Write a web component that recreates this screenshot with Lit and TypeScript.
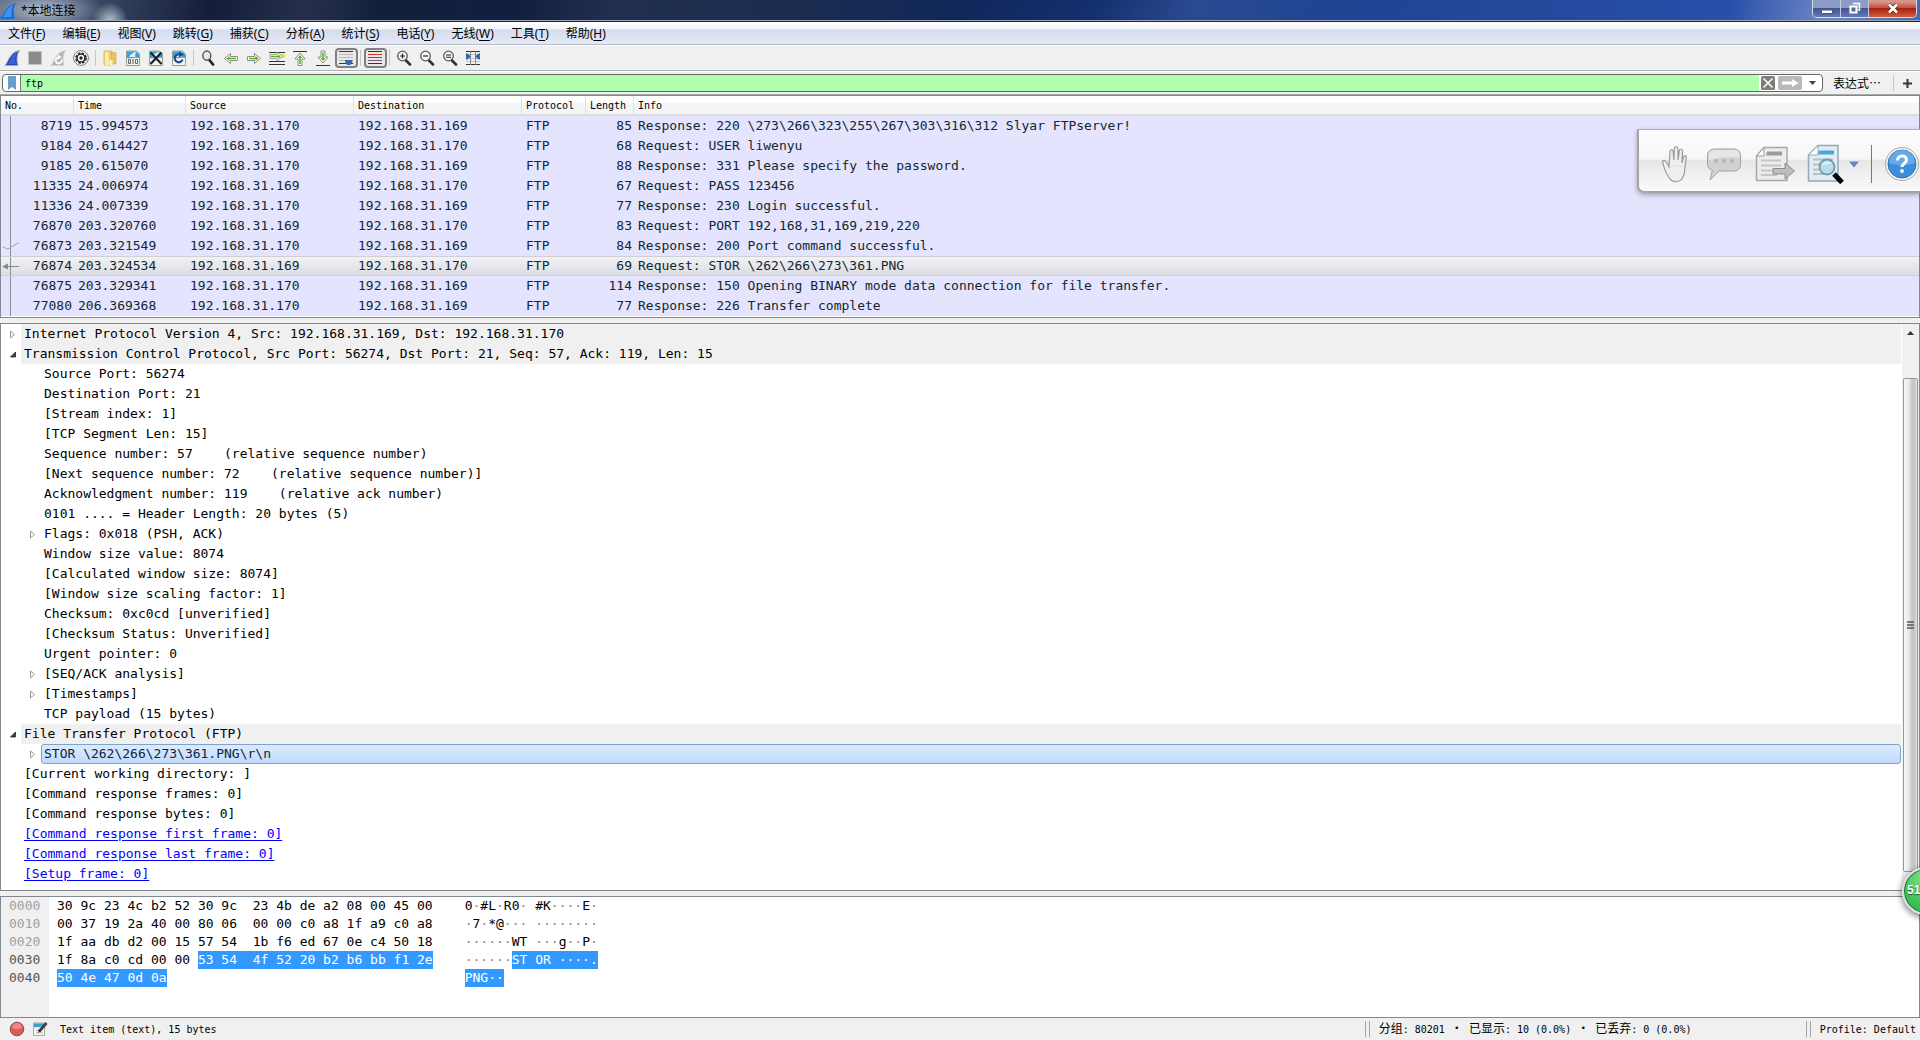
import { LitElement, html, css, svg, nothing, TemplateResult } from "lit";
import { customElement } from "lit/decorators.js";
import { classMap } from "lit/directives/class-map.js";

interface Packet {
  no: string;
  time: string;
  src: string;
  dst: string;
  len: string;
  info: string;
  mark?: "ack" | "current";
}

const CLIENT = "192.168.31.169";
const SERVER = "192.168.31.170";

const packets: Packet[] = [
  { no: "8719", time: "15.994573", src: SERVER, dst: CLIENT, len: "85", info: "Response: 220 \\273\\266\\323\\255\\267\\303\\316\\312 Slyar FTPserver!" },
  { no: "9184", time: "20.614427", src: CLIENT, dst: SERVER, len: "68", info: "Request: USER liwenyu" },
  { no: "9185", time: "20.615070", src: SERVER, dst: CLIENT, len: "88", info: "Response: 331 Please specify the password." },
  { no: "11335", time: "24.006974", src: CLIENT, dst: SERVER, len: "67", info: "Request: PASS 123456" },
  { no: "11336", time: "24.007339", src: SERVER, dst: CLIENT, len: "77", info: "Response: 230 Login successful." },
  { no: "76870", time: "203.320760", src: CLIENT, dst: SERVER, len: "83", info: "Request: PORT 192,168,31,169,219,220" },
  { no: "76873", time: "203.321549", src: SERVER, dst: CLIENT, len: "84", info: "Response: 200 Port command successful.", mark: "ack" },
  { no: "76874", time: "203.324534", src: CLIENT, dst: SERVER, len: "69", info: "Request: STOR \\262\\266\\273\\361.PNG", mark: "current" },
  { no: "76875", time: "203.329341", src: SERVER, dst: CLIENT, len: "114", info: "Response: 150 Opening BINARY mode data connection for file transfer." },
  { no: "77080", time: "206.369368", src: SERVER, dst: CLIENT, len: "77", info: "Response: 226 Transfer complete" },
];

interface Field {
  text: string;
  level: 0 | 1;
  toggle?: "open" | "closed";
  kind?: "proto" | "selected" | "link";
}

const fields: Field[] = [
  { text: "Internet Protocol Version 4, Src: 192.168.31.169, Dst: 192.168.31.170", level: 0, toggle: "closed", kind: "proto" },
  { text: "Transmission Control Protocol, Src Port: 56274, Dst Port: 21, Seq: 57, Ack: 119, Len: 15", level: 0, toggle: "open", kind: "proto" },
  { text: "Source Port: 56274", level: 1 },
  { text: "Destination Port: 21", level: 1 },
  { text: "[Stream index: 1]", level: 1 },
  { text: "[TCP Segment Len: 15]", level: 1 },
  { text: "Sequence number: 57    (relative sequence number)", level: 1 },
  { text: "[Next sequence number: 72    (relative sequence number)]", level: 1 },
  { text: "Acknowledgment number: 119    (relative ack number)", level: 1 },
  { text: "0101 .... = Header Length: 20 bytes (5)", level: 1 },
  { text: "Flags: 0x018 (PSH, ACK)", level: 1, toggle: "closed" },
  { text: "Window size value: 8074", level: 1 },
  { text: "[Calculated window size: 8074]", level: 1 },
  { text: "[Window size scaling factor: 1]", level: 1 },
  { text: "Checksum: 0xc0cd [unverified]", level: 1 },
  { text: "[Checksum Status: Unverified]", level: 1 },
  { text: "Urgent pointer: 0", level: 1 },
  { text: "[SEQ/ACK analysis]", level: 1, toggle: "closed" },
  { text: "[Timestamps]", level: 1, toggle: "closed" },
  { text: "TCP payload (15 bytes)", level: 1 },
  { text: "File Transfer Protocol (FTP)", level: 0, toggle: "open", kind: "proto" },
  { text: "STOR \\262\\266\\273\\361.PNG\\r\\n", level: 1, toggle: "closed", kind: "selected" },
  { text: "[Current working directory: ]", level: 0 },
  { text: "[Command response frames: 0]", level: 0 },
  { text: "[Command response bytes: 0]", level: 0 },
  { text: "[Command response first frame: 0]", level: 0, kind: "link" },
  { text: "[Command response last frame: 0]", level: 0, kind: "link" },
  { text: "[Setup frame: 0]", level: 0, kind: "link" },
];

interface HexLine {
  offset: string;
  hex: string;
  hexSel?: string;
  text: string;
  textSel?: string;
}

const hexLines: HexLine[] = [
  { offset: "0000", hex: "30 9c 23 4c b2 52 30 9c  23 4b de a2 08 00 45 00", text: "0·#L·R0· #K····E·" },
  { offset: "0010", hex: "00 37 19 2a 40 00 80 06  00 00 c0 a8 1f a9 c0 a8", text: "·7·*@··· ········" },
  { offset: "0020", hex: "1f aa db d2 00 15 57 54  1b f6 ed 67 0e c4 50 18", text: "······WT ···g··P·" },
  { offset: "0030", hex: "1f 8a c0 cd 00 00 ", hexSel: "53 54  4f 52 20 b2 b6 bb f1 2e", text: "······", textSel: "ST OR ····." },
  { offset: "0040", hex: "", hexSel: "50 4e 47 0d 0a", text: "", textSel: "PNG··" },
];

const menus: [string, string][] = [
  ["文件", "F"], ["编辑", "E"], ["视图", "V"], ["跳转", "G"], ["捕获", "C"], ["分析", "A"],
  ["统计", "S"], ["电话", "Y"], ["无线", "W"], ["工具", "T"], ["帮助", "H"],
];

const file = svg`<path d="M1.5 1h10l3 3v11.500h-13z" fill="#f4f6ee" stroke="#9a9d92"/><path d="M2 1.500h9.500l2.500 2.500v4c-4-1-7 1-12 0z" fill="#3c9fd6"/><path d="M4 7c1.500-3 4-5 8-5-2 1-2 3-1.500 5z" fill="#d8eef8"/>`;
const fin = "M1 15.500C4.500 12 5.500 2 15.500.500 12.500 4.500 12.500 11 14 15.500z";
const greenRight = "M1.500 6.500h7V3.500l6 5-6 5v-3h-7z";
const lens = svg`<path d="M9.500 10l4.500 4.500" stroke="#333" stroke-width="2.600" stroke-linecap="round"/><circle cx="6.500" cy="6" r="4.800" fill="#f6f6f6" stroke="#555b58" stroke-width="1.300"/>`;

const icons: Record<string, TemplateResult> = {
  start: svg`<path d=${fin} fill="#1f45bd" stroke="#a9abb0"/><path d="M4 14C7 10 7.500 4 13 2c-2 4-2 8-1 12z" fill="#3a62d6"/>`,
  stop: svg`<path d="M1.500 1.500h13v13h-13z" fill="#8b8b8b" stroke="#c4c4c4"/>`,
  restart: svg`<path d=${fin} fill="#b4b4b4" stroke="#d2d2d2"/><path d="M11.500 9.500a3 3 0 1 1-2.500-2" fill="none" stroke="#fff" stroke-width="1.800"/><path d="M8 4.500l3.500 2.500L8 9.500z" fill="#fff"/>`,
  options: svg`<circle cx="8" cy="8" r="7.400" fill="#fff" stroke="#777"/><circle cx="8" cy="8" r="5" fill="none" stroke="#333" stroke-width="1.800" stroke-dasharray="2.600 1.327"/><circle cx="8" cy="8" r="3.900" fill="none" stroke="#222" stroke-width="1.400"/><circle cx="8" cy="8" r="1.700" fill="#222"/>`,
  open: svg`<path d="M2 1h8v14H2z" fill="#f0d376" stroke="#c9a748" stroke-width=".6"/><path d="M9 2.500h5V14H9z" fill="#e7c45c" stroke="#c9a748" stroke-width=".6"/><path d="M3 2h3l1 13H3z" fill="#faecb4"/><path d="M7.500 10h3v5h-3z" fill="#fff3c2"/>`,
  save: svg`${file}<path d="M3.500 9.500h2v4h-2zM10.500 9.500h2v4h-2z" fill="none" stroke="#666"/><path d="M8 9v5" stroke="#666" stroke-width="1.200"/>`,
  close: svg`${file}<path d="M2.500 2.500l11 11.500M13.500 2.500l-11 11.500" stroke="#1c2330" stroke-width="2.200"/>`,
  reload: svg`${file}<path d="M11.500 9.500a4 4 0 1 1-2.500-5" fill="none" stroke="#1e4a8c" stroke-width="2.200"/><path d="M8 1l5 3.500L8 7.500z" fill="#1e4a8c"/>`,
  find: svg`<path d="M9 9.500l4 5" stroke="#222" stroke-width="2.800" stroke-linecap="round"/><ellipse cx="6.800" cy="5.600" rx="4" ry="4.600" fill="#e8e8e8" stroke="#555" stroke-width="1.400"/>`,
  back: svg`<path d="M14.500 6.500h-7V3.500l-6 5 6 5v-3h7z" fill="#fff" stroke="#8c8c8c"/><path d="M13 7.800H6.500V6L3.500 8.500l3 2.500V9.300H13z" fill="#55b614"/>`,
  forward: svg`<path d=${greenRight} fill="#fff" stroke="#8c8c8c"/><path d="M3 7.800h6.500V6l3 2.500-3 2.500V9.300H3z" fill="#55b614"/>`,
  goto: svg`<path d="M0 2.500h16M0 11.500h16M0 14.500h16" stroke="#333"/><path d="M11 4h5v4h-5z" fill="#f4e14a"/><path d="M1 4.500h7V2l5.500 4.500L8 11V8.500H1z" fill="#fff" stroke="#8c8c8c" stroke-width=".8"/><path d="M2 5.700h7V4.500l2.700 2L9 8.700V7.200H2z" fill="#55b614"/>`,
  first: svg`<path d="M1 1.500h14" stroke="#333"/><path d="M6 15.500V9H3l5-6 5 6h-3v6.500z" fill="#fff" stroke="#8c8c8c"/><path d="M7.200 14V8H5.700L8 5l2.300 3H8.800v6z" fill="#55b614"/>`,
  last: svg`<path d="M1 15.500h14" stroke="#333"/><path d="M6 1v6H3l5 6 5-6h-3V1z" fill="#fff" stroke="#8c8c8c"/><path d="M7.200 2.500V8H5.700L8 11l2.300-3H8.800V2.500z" fill="#55b614"/>`,
  scroll: svg`<path d="M1 1.500h14M1 13.500h14" stroke="#333"/><path d="M1 4.500h14M1 7.500h14M1 10.500h7" stroke="#b9bab2"/><path d="M7 10h7.500v1.500L12.500 15h-3.500L7 11.500z" fill="#3468ad"/>`,
  colorize: svg`<path d="M1 1.500h14M1 13.500h14" stroke="#333"/><path d="M1 4.500h14" stroke="#d8302a"/><path d="M1 7.500h14" stroke="#2c62b0"/><path d="M1 10.500h14" stroke="#7a5a8a"/>`,
  zoomin: svg`${lens}<path d="M4 6h5M6.500 3.500v5" stroke="#222" stroke-width="1.200"/>`,
  zoomout: svg`${lens}<path d="M4 6h5" stroke="#222" stroke-width="1.200"/>`,
  zoomreset: svg`${lens}<path d="M4 5h5M4 7.200h5" stroke="#222" stroke-width="1.100"/>`,
  columns: svg`<path d="M1 1.500h14M1 14.500h14" stroke="#333"/><path d="M1 4.500h14M1 8.500h14M1 11.500h14" stroke="#c4c4bd"/><path d="M5.500 1v14M10.500 1v14" stroke="#888"/><path d="M1 3.500h1.500L6 6.500l-3.500 3H1zM15 3.500h-1.500L10 6.500l3.500 3H15z" fill="#3468ad"/>`,
};

const tools: [string, string][] = [
  ["start", "开始捕获"], ["stop", "停止捕获"], ["restart", "重新开始捕获"], ["options", "捕获选项"], ["|", ""],
  ["open", "打开"], ["save", "保存"], ["close", "关闭"], ["reload", "重新加载"], ["|", ""],
  ["find", "查找"], ["back", "后退"], ["forward", "前进"], ["goto", "转到分组"], ["first", "首个分组"], ["last", "最新分组"], ["scroll", "自动滚动"], ["|", ""],
  ["colorize", "着色"], ["|", ""],
  ["zoomin", "放大"], ["zoomout", "缩小"], ["zoomreset", "普通大小"], ["columns", "调整列宽"],
];

const icon = (name: string) => html`<svg class="icon" viewBox="0 0 16 16" aria-hidden="true">${icons[name]}</svg>`;

/* Non-printable bytes are drawn as grey middle dots. */
const bytesText = (s: string) =>
  s.split(/(·+)/).map((part) => (part.startsWith("·") ? html`<span class="np">${part}</span>` : part));

@customElement("app-root")
export class AppRoot extends LitElement {
  static styles = css`
    :host {
      display: block;
      --mono: "DejaVu Sans Mono", "Noto Sans CJK SC", monospace;
      --ui: "Noto Sans", "Noto Sans CJK SC", sans-serif;
      --edge: #828790;
      --face: #f0f0f0;
      font-family: var(--ui);
      font-size: 12px;
      color: #000;
    }
    * { box-sizing: border-box; }
    button, input { font: inherit; color: inherit; border: 0; padding: 0; margin: 0; background: none; }
    svg { display: block; }
    .window { position: relative; display: flex; flex-direction: column; min-height: 100vh; background: var(--face); overflow: hidden; }

    .title {
      display: flex; align-items: flex-start; height: 22px; padding-right: 3px;
      border-bottom: 1px solid #1c2440; box-shadow: inset 0 -1px #9aa3b8;
      background:
        radial-gradient(ellipse 60px 22px at 44px 10px, rgba(200, 208, 224, .85), rgba(150, 160, 180, .5) 60%, transparent),
        radial-gradient(ellipse 18px 20px at 110px 22px, #b4cbd0, transparent),
        linear-gradient(100deg, #5d6a88 0, #27324e 8%, #141e38 11%, #26304a 16%, #131f3a 20%, #122040 27%, #22304e 32%, #1a2c50 42%, #10275a 50%, #14306f 57%, #2a4a90 62%, #1f4494 70%, #24489c 80%, #2850aa 90%, #6d86c4 95%, #4a68b0 100%);
    }
    .title .icon { margin: 3px 5px 0 0; }
    .title h1 { margin: 0; font: inherit; line-height: 22px; flex: 1; }
    .caption { display: flex; height: 18px; border: 1px solid #d3dcf0; border-top: 0; border-radius: 0 0 5px 5px; overflow: hidden; }
    .caption button { display: grid; place-items: center; width: 28px; background: linear-gradient(#8d9cc6 45%, #44558f 50%, #6579b4); border-right: 1px solid #c5cde2; }
    .caption .shut { width: 47px; border-right: 0; background: linear-gradient(#d9958a 10%, #c4523f 45%, #a8200f 50%, #d0603f); }

    .menu { display: flex; gap: 1px; height: 23px; padding-top: 1px; border-bottom: 1px solid #b6bccc; background: linear-gradient(#fff 0, #f3f5fb 30%, #d5dcee 36%, #e3e9f6 100%); }
    .menu button { padding: 0 8px; line-height: 22px; white-space: nowrap; }
    .menu u { text-underline-offset: 2px; }

    .tools { display: flex; align-items: center; height: 26px; padding-left: 1px; border-top: 1px solid #fff; border-bottom: 1px solid #b0b0b0; }
    .tools button { display: grid; align-items: center; width: 23px; height: 20px; padding-left: 3px; }
    .tools .on { padding-left: 1px; border: 2px solid #808080; border-radius: 4px; background: #e8e8e8; }
    .icon { width: 16px; height: 16px; }
    .sep { width: 1px; height: 16px; margin: 0 3px 0 2px; background: #c6c6c6; }

    .filter { display: flex; align-items: center; height: 24px; padding: 0 8px 0 2px; border-top: 1px solid #fff; border-bottom: 1px solid #a8a8a8; }
    .box { display: flex; flex: 1; align-items: stretch; height: 18px; border: 1px solid #666; border-radius: 4px; background: #fff; overflow: hidden; }
    .box .mark { display: grid; place-items: center; width: 18px; border-right: 1px solid #777; }
    .box input { flex: 1; min-width: 0; padding: 0 4px; background: #afffaf; font-family: var(--mono); font-size: 10px; outline: 0; }
    .acts { display: flex; align-items: center; gap: 3px; padding: 0 2px; }
    .acts .drop { display: grid; place-items: center; width: 15px; height: 14px; }
    .expr { margin: 0 12px 0 10px; white-space: nowrap; font-family: "Noto Sans CJK SC", sans-serif; line-height: 18px; }
    .filter .sep { margin: 0 9px 0 0; }

    .pane { border: 1px solid var(--edge); background: #fff; }
    .panes { display: flex; flex: 1; flex-direction: column; gap: 5px; font-family: var(--mono); font-size: 13px; }

    table { width: 100%; border-collapse: separate; border-spacing: 0; table-layout: fixed; }
    th, td { padding: 0 4px; text-align: left; white-space: pre; overflow: hidden; font-weight: 400; }
    th { height: 20px; padding-top: 2px; font-size: 10px; line-height: 16px; border-right: 1px solid #dfe0e2; border-bottom: 2px solid #dcdcde; background: linear-gradient(#fff 40%, #f4f5f6 42%); }
    th:last-child { border-right: 0; }
    td { height: 20px; line-height: 20px; background: #e4e4ff; color: #12272e; }
    .c-no { width: 73px; } .c-time { width: 112px; } .c-addr { width: 168px; } .c-proto { width: 64px; } .c-len { width: 48px; }
    .packets { padding-bottom: 1px; }
    .no { padding: 0 2px 0 0; background: linear-gradient(#8b8f99, #8b8f99) 9px 0 / 1px 100% no-repeat #e4e4ff; }
    .no div { display: flex; justify-content: space-between; }
    .len { text-align: right; padding: 0 2px; }
    .cur td { background: linear-gradient(#f1f2f6, #dcdde3); border-top: 1px solid #cfcfd4; border-bottom: 1px solid #cfcfd4; line-height: 18px; }
    .cur .no { background: linear-gradient(#8b8f99, #8b8f99) 9px 0 / 1px 100% no-repeat, linear-gradient(#f1f2f6, #dcdde3); }

    .details { display: flex; }
    .tree { flex: 1; min-width: 0; margin: 0; padding: 0 0 6px; list-style: none; }
    .row { display: flex; height: 20px; line-height: 20px; white-space: pre; }
    .sub { padding-left: 20px; }
    .toggle { display: grid; place-items: center; flex: none; width: 20px; padding-left: 3px; }
    .label { flex: 1; padding: 0 3px; min-width: 0; overflow: hidden; }
    .proto .label { background: var(--face); }
    .selected .label { padding: 0 2px; line-height: 18px; border: 1px solid #7da2ce; border-radius: 3px; background: linear-gradient(#dcebfd, #c1dbfc); color: #10233c; }
    .label a { color: #00f; text-underline-offset: 2px; }
    .scroll { display: flex; flex-direction: column; align-items: center; width: 17px; margin-left: 1px; padding: 7px 1px 18px; background: var(--face); }
    .scroll svg { flex: none; }
    .thumb { display: grid; place-items: center; flex: 1; align-self: stretch; margin-top: 43px; border: 1px solid #979797; border-radius: 2px; background: linear-gradient(90deg, #f5f5f5 10%, #e3e3e5 45%, #cacace 55%, #c4c4ca 85%, #ededed); }

    .hex { display: flex; flex: 1; line-height: 18px; white-space: pre; }
    .offsets { width: 48px; padding-left: 8px; background: var(--face); color: #a0a0a0; }
    .offsets .near { color: #555; }
    .bytes { padding-left: 8px; }
    .chars { padding-left: 32px; }
    .line { height: 18px; }
    .sel { display: inline-block; background: #3399ff; color: #fff; }
    .np { color: #888; }
    .sel .np { color: #fff; }

    .status { display: flex; align-items: center; height: 22px; padding: 0 4px 0 9px; font-family: var(--mono); font-size: 10px; white-space: pre; }
    .status b { font-weight: 400; font-size: 12px; font-family: "Noto Sans CJK SC", sans-serif; }
    .status .bead { margin-right: 7px; }
    .status .msg { flex: 1; margin-left: 12px; }
    .grip { width: 5px; height: 16px; margin-right: 9px; border: solid #a5a5a5; border-width: 0 1px; }
    .counts { width: 427px; line-height: 20px; }

    .float { position: absolute; z-index: 1; top: 129px; right: 0; display: flex; align-items: center; gap: 12px; width: 283px; height: 64px; padding: 7px 0 0 20px; border: 1px solid #b0b0b4; border-left: 2px solid #a3a3a8; border-right: 0; border-bottom: 2px solid #a3a3a8; border-radius: 0 0 0 7px; background: linear-gradient(#fdfdfd, #f6f6f6 48%, #e6e6e6 49%, #fafafa); box-shadow: 0 2px 5px rgba(0, 0, 0, .3); overflow: hidden; }
    .float button { flex: none; }
    .float .split { display: flex; align-items: center; gap: 4px; }
    .float .bar { flex: none; width: 1px; height: 38px; background: #777; }
    .badge { position: absolute; z-index: 1; top: 867px; right: -30px; width: 48px; height: 48px; padding: 0 0 2px 3px; border: 2px solid #ddd; border-radius: 50%; background: radial-gradient(circle at 50% 20%, #8fe08a, #3fc257 60%, #36b14e); box-shadow: inset 0 0 0 1px #17723a, 0 2px 7px rgba(0, 0, 0, .6); color: #fff; font: 700 12px "Liberation Sans", sans-serif; text-align: left; text-shadow: 0 1px 1px #14632c; }
  `;

  private mark(kind?: string) {
    if (kind === "ack") return html`<svg width="20" height="20" viewBox="0 0 20 20" aria-hidden="true"><path d="M2 11l5 2 11-6.500" fill="none" stroke="#9da0b0"/></svg>`;
    if (kind === "current") return html`<svg width="20" height="18" viewBox="0 0 20 18" aria-hidden="true"><path d="M6 9.500h12" stroke="#7f8a8a"/><path d="M1 9.500l6-3v6z" fill="#7f8a8a"/></svg>`;
    return html`<span></span>`;
  }

  private toggle(state?: string) {
    if (!state) return html`<span class="toggle"></span>`;
    const open = state === "open";
    return html`<button class="toggle" aria-label=${open ? "收起" : "展开"}>
      <svg width="8" height="9" viewBox="0 0 8 9">${open
        ? svg`<path d="M6.500 2v5H1.500z" fill="#444" stroke="#222" stroke-width=".8"/>`
        : svg`<path d="M1.500 1v7l4-3.500z" fill="#fff" stroke="#999"/>`}</svg>
    </button>`;
  }

  private renderFloat() {
    return html`<div class="float" role="toolbar" aria-label="标注">
      <button aria-label="移动"><svg width="34" height="38" viewBox="0 0 34 38"><path d="M11 34C8 30 5 24 3.500 16c2-1 4 0 5 3l1.500 3 1-15c0-3 3-3 3.200 0l.6 8 .5-11c.2-3 3.400-3 3.500 0l.3 11 1.200-9c.4-2.600 3.400-2.200 3.200.4L23 18l1.600-6c.8-2.200 3-1.500 2.600.7L25.500 27c-.6 5-3 8.500-7 9.500-3 .4-6-.5-7.500-2.500z" fill="#efefef" stroke="#9b9b9b" stroke-width="1.200"/><path d="M12 22c3-2 8-2 10 0" fill="none" stroke="#ddd"/></svg></button>
      <button aria-label="批注"><svg width="38" height="38" viewBox="0 0 38 38"><path d="M10 4h19c4 0 6.500 3 6.500 6.500v9c0 4-3 6.500-6.500 6.500H14l-9 9 2.500-10C4 24 2.500 22 2.500 19v-8.500C2.500 6.500 5.500 4 10 4z" fill="#d2d2d2" stroke="#a2a2a2"/><path d="M4 15V10c0-3 3-5 6-5h19c3 0 5.500 2 5.500 5v3c-10-2-20-1-30.500 2z" fill="#e6e6e6"/><circle cx="11" cy="16" r="2" fill="#b4b4b4"/><circle cx="19" cy="16" r="2" fill="#b4b4b4"/><circle cx="27" cy="16" r="2" fill="#b4b4b4"/></svg></button>
      <button aria-label="导出"><svg width="40" height="38" viewBox="0 0 40 38"><path d="M1.500 11L9 2.500h23v33H1.500z" fill="#ededed" stroke="#a8a8a8" stroke-width="1.500"/><path d="M1.500 11L9 2.500V11z" fill="#fff" stroke="#999"/><path d="M12 6.500h15v4H11z" fill="#9c9c9c"/><path d="M6 15.500h20M6 20.500h20M6 25.500h12M6 30h16" stroke="#c6c6c6" stroke-width="2"/><path d="M18 23.500h12V18l9.500 8-9.500 8v-5H18z" fill="#bdbdbd" stroke="#8c8c8c"/></svg></button>
      <div class="split">
        <button aria-label="查看"><svg width="38" height="40" viewBox="0 0 38 40"><path d="M1.500 11L11 1.500h20V37H1.500z" fill="#e4ecf2" stroke="#8eaabc" stroke-width="1.500"/><path d="M1.500 11L11 1.500V11z" fill="#fff" stroke="#8eaabc"/><path d="M12 6.500h15v4H11z" fill="#45a5e6"/><path d="M6 15.500h20M6 20.500h20M6 25.500h20M6 30h16" stroke="#b4bec6" stroke-width="2"/><path d="M27 30l8 8.500" stroke="#000" stroke-width="5"/><circle cx="20" cy="23" r="7.500" fill="#b3dcec" fill-opacity=".85" stroke="#6f9aac" stroke-width="1.800"/><path d="M15 21c2-4 7-5 10-1z" fill="#dff2f8"/></svg></button>
        <button aria-label="更多"><svg width="10" height="7" viewBox="0 0 10 7"><path d="M0 .5h10L5 6.500z" fill="#6a80c4"/></svg></button>
      </div>
      <span class="bar"></span>
      <button aria-label="帮助"><svg width="36" height="36" viewBox="0 0 36 36"><circle cx="18" cy="18" r="16.500" fill="#f4f4f4" stroke="#aaa"/><circle cx="18" cy="18" r="14" fill="#3b8fdc" stroke="#2f6fae"/><path d="M5 17a13 13 0 0 1 26 0c-8 3-18 3-26 0z" fill="#65aae8"/><path d="M13.500 14.500c0-6 9-6 9-.5 0 3.500-4.500 3.500-4.500 7" fill="none" stroke="#fff" stroke-width="3"/><circle cx="18" cy="25" r="1.900" fill="#fff"/></svg></button>
    </div>`;
  }

  render() {
    return html`<div class="window">
      <header class="title">
        <svg class="icon" viewBox="0 0 16 16" aria-hidden="true"><path d="M0 16C3 14 5 2 16 0c-3 5-2.500 11-1 16z" fill="#1b6fd8"/><path d="M3 14C6 10 7 4 13 2c-2 4-2 8-1.500 12z" fill="#3f92f0"/></svg>
        <h1>*本地连接</h1>
        <div class="caption">
          <button aria-label="最小化"><svg width="12" height="10" viewBox="0 0 12 10"><path d="M.5 6h11v3.500H.5z" fill="#fff" stroke="#4b5474"/></svg></button>
          <button aria-label="还原"><svg width="13" height="13" viewBox="0 0 13 13"><path d="M5 1.500h6.500V8H10" fill="none" stroke="#fff" stroke-width="1.500"/><path d="M2.500 4.500h6v6h-6z" fill="#56658f" stroke="#fff" stroke-width="2.200"/></svg></button>
          <button class="shut" aria-label="关闭"><svg width="12" height="11" viewBox="0 0 12 11"><path d="M2 1.500l8 8M10 1.500l-8 8" stroke="#5d2620" stroke-width="4"/><path d="M2 1.500l8 8M10 1.500l-8 8" stroke="#fff" stroke-width="2.600"/></svg></button>
        </div>
      </header>
      <nav class="menu">${menus.map(([n, k]) => html`<button>${n}(<u>${k}</u>)</button>`)}</nav>
      <div class="tools" role="toolbar">
        ${tools.map(([n, t]) => n === "|" ? html`<span class="sep"></span>` : html`<button class=${classMap({ on: n === "scroll" || n === "colorize" })} aria-label=${t}>${icon(n)}</button>`)}
      </div>
      <div class="filter">
        <div class="box">
          <button class="mark" aria-label="书签"><svg width="10" height="14" viewBox="0 0 10 14"><path d="M1 0h8v14l-4-3-4 3z" fill="#6c9bd2"/></svg></button>
          <input type="text" aria-label="显示过滤器" value="ftp" />
          <div class="acts">
            <button aria-label="清除"><svg width="14" height="14" viewBox="0 0 14 14"><rect width="14" height="14" rx="1.500" fill="#7b8078"/><path d="M2.500 2.500l9 9M11.500 2.500l-9 9" stroke="#fff" stroke-width="1.500"/></svg></button>
            <button aria-label="应用"><svg width="24" height="14" viewBox="0 0 24 14"><rect width="24" height="14" rx="2" fill="#b9b9b9"/><path d="M4 5.500h10V3l6.500 4-6.500 4V8.500H4z" fill="#fff"/></svg></button>
            <button class="drop" aria-label="历史"><svg width="7" height="4" viewBox="0 0 7 4"><path d="M0 0h7L3.500 4z" fill="#444"/></svg></button>
          </div>
        </div>
        <button class="expr" lang="zh-CN">表达式…</button>
        <span class="sep"></span>
        <button aria-label="添加"><svg width="9" height="9" viewBox="0 0 9 9"><path d="M4.500 0v9M0 4.500h9" stroke="#333" stroke-width="2"/></svg></button>
      </div>
      <main class="panes">
        <section class="pane packets">
          <table>
            <colgroup><col class="c-no" /><col class="c-time" /><col class="c-addr" /><col class="c-addr" /><col class="c-proto" /><col class="c-len" /><col /></colgroup>
            <thead><tr>${["No.", "Time", "Source", "Destination", "Protocol", "Length", "Info"].map((h) => html`<th>${h}</th>`)}</tr></thead>
            <tbody>
              ${packets.map((p) => html`<tr class=${p.mark === "current" ? "cur" : nothing}>
                <td class="no"><div>${this.mark(p.mark)}${p.no}</div></td><td>${p.time}</td><td>${p.src}</td><td>${p.dst}</td><td>FTP</td><td class="len">${p.len}</td><td>${p.info}</td>
              </tr>`)}
            </tbody>
          </table>
        </section>
        <section class="pane details">
          <ul class="tree">
            ${fields.map((f) => html`<li class="row ${f.level ? "sub" : ""} ${f.kind ?? ""}">${this.toggle(f.toggle)}<span class="label">${f.kind === "link" ? html`<a href="#frame">${f.text}</a>` : f.text}</span></li>`)}
          </ul>
          <div class="scroll" aria-hidden="true">
            <svg width="7" height="4" viewBox="0 0 7 4"><path d="M0 4h7L3.500 0z" fill="#333"/></svg>
            <div class="thumb"><svg width="7" height="8" viewBox="0 0 7 8"><path d="M0 1h7M0 4h7M0 7h7" stroke="#555" stroke-width="1.500"/></svg></div>
          </div>
        </section>
        <section class="pane hex">
          <div class="offsets">${hexLines.map((l) => html`<div class="line ${l.hexSel ? "near" : ""}">${l.offset}</div>`)}</div>
          <div class="bytes">${hexLines.map((l) => html`<div class="line">${l.hex}${l.hexSel ? html`<span class="sel">${l.hexSel}</span>` : nothing}</div>`)}</div>
          <div class="chars">${hexLines.map((l) => html`<div class="line">${bytesText(l.text)}${l.textSel ? html`<span class="sel">${bytesText(l.textSel)}</span>` : nothing}</div>`)}</div>
        </section>
      </main>
      <footer class="status">
        <button class="bead" aria-label="专家信息"><svg width="16" height="16" viewBox="0 0 16 16"><circle cx="8" cy="8" r="6.800" fill="#dd5a5a" stroke="#8e4a46"/><path d="M3 7a5 5 0 0 1 10 0c-3 1.500-7 1.500-10 0z" fill="#ee8585"/></svg></button>
        <button aria-label="捕获注释"><svg width="16" height="16" viewBox="0 0 16 16"><path d="M1.500 2h11v12.500h-11z" fill="#f3f4ee" stroke="#a9aca2"/><path d="M2 2.500h10V6c-3-1-6 1-10 0z" fill="#3c9fd6"/><path d="M4 9.500h5M4 12h7" stroke="#bbb"/><path d="M14.500 2L7 10.500" stroke="#3d3f40" stroke-width="2.800"/><path d="M8 8.500L5.500 12l3.800-2z" fill="#222"/></svg></button>
        <span class="msg">Text item (text), 15 bytes</span>
        <span class="grip"></span>
        <span class="counts"><b>分组</b>: 80201 <b>・</b> <b>已显示</b>: 10 (0.0%) <b>・</b> <b>已丢弃</b>: 0 (0.0%)</span>
        <span class="grip"></span>
        <span>Profile: Default</span>
      </footer>
      ${this.renderFloat()}
      <button class="badge">51</button>
    </div>`;
  }
}
